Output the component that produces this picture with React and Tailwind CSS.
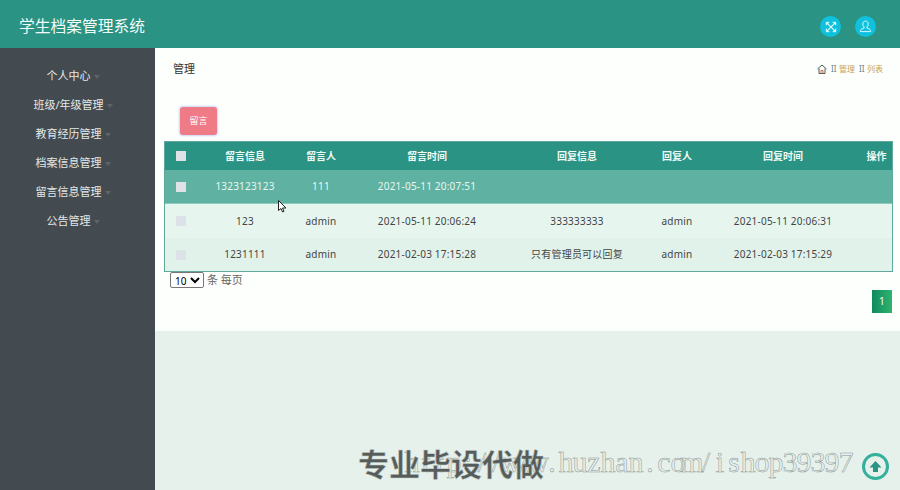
import React from "react";

const menus = ["个人中心", "班级/年级管理", "教育经历管理", "档案信息管理", "留言信息管理", "公告管理"];
const heads = ["留言信息", "留言人", "留言时间", "回复信息", "回复人", "回复时间"];
const rows = [
  { cells: ["1323123123", "111", "2021-05-11 20:07:51", "", "", ""], cls: "h-[34px] bg-[#5fb2a1] text-[#eaf6f2] border-b border-[#8fcabd]", box: "bg-[#dfe3e8]" },
  { cells: ["123", "admin", "2021-05-11 20:06:24", "333333333", "admin", "2021-05-11 20:06:31"], cls: "h-[34px] bg-[#e6f6ef] text-[#444]", box: "bg-[#dde1e8]" },
  { cells: ["1231111", "admin", "2021-02-03 17:15:28", "只有管理员可以回复", "admin", "2021-02-03 17:15:29"], cls: "h-[33px] bg-[#e1f2eb] text-[#444]", box: "bg-[#dde1e8]" },
];
const cols = "grid grid-cols-[32px_96px_56px_156px_144px_56px_156px_31px] items-center text-center";
const mark = "http://www.huzhan.com/ishop39397".split("");

const App = () => {
  return (
    <div className="relative w-[900px] h-[490px] overflow-hidden bg-[#e6f1ec] font-['Noto_Sans','Noto_Sans_CJK_SC',sans-serif] text-[11px]">
      <header className="h-12 bg-[#2b9383] flex items-center justify-between pt-[5px] pl-[19px] pr-[24px]">
        <h1 className="text-[15.750px] text-[#f2fbf8] font-normal">学生档案管理系统</h1>
        <div className="flex items-center gap-[14px]">
          <div className="w-[21px] h-[21px] rounded-full bg-[#0fc1dc] flex items-center justify-center">
            <svg width="12" height="12" viewBox="0 0 14 14" fill="none" stroke="#eafcff" strokeWidth="1.3">
              <path d="M3 3l8 8M11 3l-8 8" />
              <path d="M1.500 5V1.500H5M9 1.500h3.500V5M12.500 9v3.500H9M5 12.500H1.500V9" fill="#eafcff" strokeWidth="1" />
            </svg>
          </div>
          <div className="w-[21px] h-[21px] rounded-full bg-[#0fc1dc] flex items-center justify-center">
            <svg width="13" height="13" viewBox="0 0 14 14" fill="none" stroke="#eafcff" strokeWidth="1">
              <path d="M7 1.200c-1.800 0-2.900 1.300-2.900 3.100 0 1.400.6 2.600 1.400 3.200v1.200c-1.700.5-3.700 1.200-4 2.600v1.200h11v-1.200c-.3-1.400-2.300-2.100-4-2.600V7.500c.8-.6 1.400-1.800 1.400-3.200 0-1.800-1.100-3.100-2.900-3.100z" />
            </svg>
          </div>
        </div>
      </header>
      <div className="flex h-[442px]">
        <aside className="w-[155px] shrink-0 bg-[#434b50] pt-[14px] pr-[9px]">
          {menus.map((m) => (
            <div key={m} className="h-[29px] flex items-center justify-center gap-[3px] text-[#e4e8e8]">
              <span>{m}</span>
              <span className="w-0 h-0 border-x-[3.500px] border-x-transparent border-t-[4px] border-t-[#5c6469]"></span>
            </div>
          ))}
        </aside>
        <main className="flex-1">
          <div className="h-[283px] bg-[#fdfffd]">
            <div className="flex items-center justify-between h-[42px] pl-[18px] pr-[17px]">
              <span className="text-[11px] text-[#333]">管理</span>
              <div className="flex items-center gap-[4px] text-[8px] text-[#c9a24f]">
                <svg width="10" height="10" viewBox="0 0 10 10" fill="none" stroke="#4a5a5a" strokeWidth="1">
                  <path d="M.5 5L5 1l4.500 4M2 4.500V9.500h6V4.500" />
                  <path d="M4 9.500V6.500h2v3" stroke="#c9703f" />
                </svg>
                <span className="w-[4px] text-center text-[#60858a]">II</span>
                <span>管理</span>
                <span className="w-[4px] text-center text-[#60858a]">II</span>
                <span>列表</span>
              </div>
            </div>
            <div className="pl-[25px] pt-[17px]">
              <button className="w-[37px] h-[28px] rounded-[3px] bg-[#ee7b85] text-white text-[9px] shadow-[0_0_2px_1px_#c9d5f5]">留言</button>
            </div>
            <div className="ml-[9px] mr-[7px] mt-[6px] border border-[#5fa89c] text-[10px]">
              <div className={`${cols} h-[28px] bg-[#2b9383] text-[#f0faf7] font-bold`}>
                <span className="w-[10px] h-[10px] bg-[#dfe3e8] mx-auto"></span>
                {heads.map((h) => (
                  <span key={h}>{h}</span>
                ))}
                <span>操作</span>
              </div>
              {rows.map((r) => (
                <div key={r.cells[0]} className={`${cols} ${r.cls} tracking-[0.2px]`}>
                  <span className={`w-[10px] h-[10px] mx-auto ${r.box}`}></span>
                  {r.cells.map((c, i) => (
                    <span key={i}>{c}</span>
                  ))}
                  <span></span>
                </div>
              ))}
            </div>
            <div className="flex items-center gap-[3px] pl-[15px] text-[#666]">
              <select className="w-[34px] h-[16px] py-0 border border-[#767676] rounded-[2px] text-[10px] leading-none text-black bg-white">
                <option>10</option>
              </select>
              <span>条 每页</span>
            </div>
            <div className="flex justify-end pr-2 pt-[1px]">
              <span className="w-[20px] h-[23px] flex items-center justify-center bg-gradient-to-r from-[#0d8a5f] to-[#2fb36f] text-[#e8f8f0]">1</span>
            </div>
          </div>
        </main>
      </div>

      {/* 页面上的水印和返回顶部 */}
      <div className="absolute left-[405px] top-[444px] flex text-[30px] leading-[36px] font-['Liberation_Serif',serif] text-transparent [-webkit-text-stroke:0.5px_#8f9594]">
        {mark.map((c, i) => (
          <span key={i} className="w-[14px] flex justify-center">{c}</span>
        ))}
      </div>
      <div className="absolute left-[358px] top-[445px] text-[31px] leading-[36px] font-bold font-['Noto_Sans_CJK_SC',sans-serif] text-[#555c5a] [-webkit-text-stroke:0.5px_#c8cfcc] whitespace-nowrap">
        专业毕设代做
      </div>
      <div className="absolute left-[862px] top-[453px] w-[27px] h-[27px] rounded-full bg-[#e6f1ec] border-[3px] border-[#35b09a] flex items-center justify-center">
        <svg width="15" height="15" viewBox="0 0 15 15" fill="#2b9383">
          <path d="M7.500 2L13.500 8.500H10V13H5V8.500H1.500z" />
        </svg>
      </div>
      <svg className="absolute left-[278px] top-[200px]" width="9" height="14" viewBox="0 0 9 14" fill="#fff" stroke="#222" strokeWidth="1">
        <path d="M.5.500v10l2.500-2 1.500 3.500 1.500-.7L4.500 8H8z" />
      </svg>
    </div>
  );
};

export default App;
